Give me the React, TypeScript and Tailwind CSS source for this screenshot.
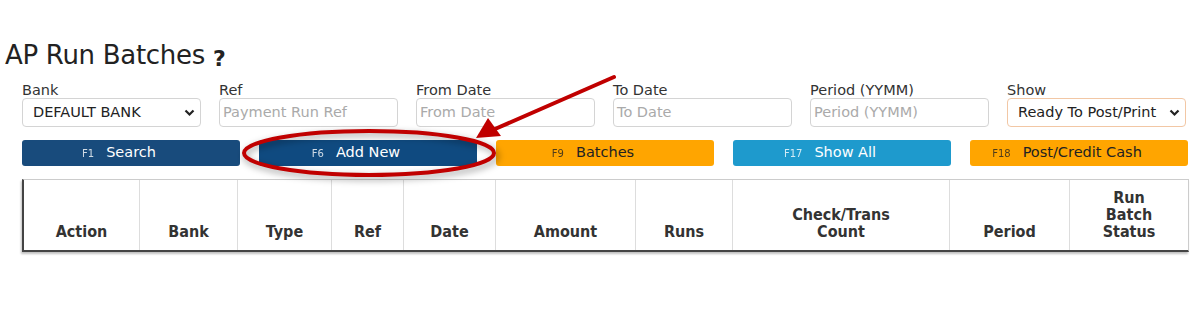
import React from 'react';

const fields = [
  { label: 'Bank', kind: 'select', value: 'DEFAULT BANK' },
  { label: 'Ref', kind: 'input', value: 'Payment Run Ref' },
  { label: 'From Date', kind: 'input', value: 'From Date' },
  { label: 'To Date', kind: 'input', value: 'To Date' },
  { label: 'Period (YYMM)', kind: 'input', value: 'Period (YYMM)' },
  { label: 'Show', kind: 'select', value: 'Ready To Post/Print', accent: true },
];

const buttons = [
  { key: 'F1', label: 'Search', cls: 'bg-[#184b7c] text-white' },
  { key: 'F6', label: 'Add New', cls: 'bg-[#0f4a80] text-white' },
  { key: 'F9', label: 'Batches', cls: 'bg-[#ffa500] text-[#222]' },
  { key: 'F17', label: 'Show All', cls: 'bg-[#1e9acd] text-white' },
  { key: 'F18', label: 'Post/Credit Cash', cls: 'bg-[#ffa500] text-[#222]' },
];

const columns = [
  { label: ['Action'], w: 'w-[116px]' },
  { label: ['Bank'], w: 'w-[98px]' },
  { label: ['Type'], w: 'w-[94px]' },
  { label: ['Ref'], w: 'w-[72px]' },
  { label: ['Date'], w: 'w-[92px]' },
  { label: ['Amount'], w: 'w-[140px]' },
  { label: ['Runs'], w: 'w-[97px]' },
  { label: ['Check/Trans', 'Count'], w: 'w-[217px]' },
  { label: ['Period'], w: 'w-[120px]' },
  { label: ['Run', 'Batch', 'Status'], w: 'flex-1' },
];

const Chevron = () => (
  <svg width="11" height="8" viewBox="0 0 11 8" className="shrink-0">
    <path d="M1.5 1.5 L5.5 5.5 L9.5 1.5" fill="none" stroke="#222" strokeWidth="2.2" />
  </svg>
);

export default function App() {
  return (
    <div className="relative w-[1200px] h-[318px] bg-white text-[#222] font-['DejaVu_Sans',Verdana,sans-serif] overflow-hidden">
      <div className="pl-[5px] pt-[38px] flex items-end gap-[8px]">
        <h1 className="text-[26px] leading-[35px] tracking-[-0.3px] text-[#222]">AP Run Batches</h1>
        <span className="text-[22px] font-bold leading-[29px] text-[#222]">?</span>
      </div>

      <div className="pl-[22px] pr-[12px] mt-[9px] flex gap-[18px]">
        {fields.map((f) => (
          <div key={f.label} className="w-[179px] flex flex-col">
            <label className="text-[14.5px] leading-[16px] text-[#333]">{f.label}</label>
            <div
              className={`h-[29px] rounded-[4px] border ${
                f.accent ? 'border-[#f2c7a5]' : 'border-[#d4d4d4]'
              } flex items-center justify-between ${f.kind === 'select' ? 'pl-[10px] pr-[5px]' : 'px-[3px]'}`}
            >
              <span className={`text-[14.5px] whitespace-nowrap ${f.kind === 'select' ? 'text-[#222]' : 'text-[#aaa]'}`}>
                {f.value}
              </span>
              {f.kind === 'select' && <Chevron />}
            </div>
          </div>
        ))}
      </div>

      <div className="pl-[22px] mt-[13px] flex gap-[19px]">
        {buttons.map((b) => (
          <div
            key={b.key}
            className={`w-[218px] h-[26px] rounded-[3px] flex items-center justify-center gap-[12px] pr-[24px] ${b.cls}`}
          >
            <span className="text-[10px] opacity-80">{b.key}</span>
            <span className="text-[14.5px]">{b.label}</span>
          </div>
        ))}
      </div>

      <div className="ml-[22px] mt-[13px] w-[1167px] h-[73px] flex border-t border-r border-[#ccc] border-l-2 border-b-2 border-l-[#444] border-b-[#444] shadow-[-1px_2px_2px_rgba(0,0,0,0.25)] font-['DejaVu_Sans_Condensed','DejaVu_Sans',sans-serif]">
        {columns.map((c, i) => (
          <div
            key={i}
            className={`${c.w} h-full flex flex-col justify-end items-center pb-[10px] text-[16px] font-bold leading-[17px] text-[#333] ${
              i < columns.length - 1 ? 'border-r border-[#ddd]' : ''
            }`}
          >
            {c.label.map((l) => (
              <span key={l}>{l}</span>
            ))}
          </div>
        ))}
      </div>

      <svg className="absolute left-0 top-0 pointer-events-none" width="1200" height="318">
        <defs>
          <filter id="sh" x="-20%" y="-50%" width="140%" height="200%">
            <feGaussianBlur stdDeviation="3" />
          </filter>
        </defs>
        <ellipse cx="371" cy="156" rx="126" ry="22" fill="none" stroke="#000" strokeOpacity="0.25" strokeWidth="6" filter="url(#sh)" />
        <ellipse cx="369" cy="153" rx="125" ry="22" fill="none" stroke="#c00000" strokeWidth="4" />
        <line x1="614" y1="77" x2="495" y2="129" stroke="#c00000" strokeWidth="4" strokeLinecap="round" />
        <polygon points="476,138 488,118 501,136" fill="#c00000" />
      </svg>
    </div>
  );
}
